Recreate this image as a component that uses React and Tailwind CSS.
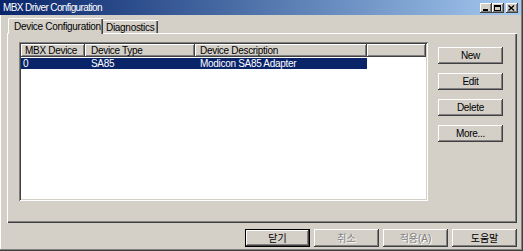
export default function App() {
  const raised =
    "shadow-[inset_-1px_-1px_0_#404040,inset_1px_1px_0_#ffffff,inset_-2px_-2px_0_#808080]";
  const btn =
    "w-[65px] h-[17px] flex items-center justify-center bg-[#d4d0c8] shadow-[inset_-1px_-1px_0_#404040,inset_1px_1px_0_#ffffff,inset_-2px_-2px_0_#808080]";
  const bbtn =
    "w-[65px] h-[18px] flex items-center justify-center bg-[#d4d0c8] shadow-[inset_-1px_-1px_0_#404040,inset_1px_1px_0_#ffffff,inset_-2px_-2px_0_#808080]";
  const disabled = "text-[#808080] [text-shadow:1px_1px_0_#ffffff]";
  return (
    <div className="w-[523px] h-[251px] bg-[#d4d0c8] flex flex-col overflow-hidden text-black text-[10px] tracking-[-0.3px] font-['Liberation_Sans','Noto_Sans_CJK_KR',sans-serif] shadow-[inset_-1px_-1px_0_#404040,inset_-2px_-2px_0_#808080,inset_1px_0_0_#ffffff]">
      {/* title bar */}
      <div className="h-[15px] mr-[2px] flex items-center justify-between pl-[3px] pr-[3px] bg-linear-to-r from-[#0a246a] to-[#a6caf0]">
        <span className="text-white text-[10px] leading-[15px] tracking-[-0.6px]">MBX Driver Configuration</span>
        <div className="flex items-center">
          <div className={"w-[12px] h-[10px] bg-[#d4d0c8] flex items-end justify-center pb-[2px] pr-[2px] " + raised}>
            <div className="w-[5px] h-[2px] bg-black" />
          </div>
          <div className={"w-[12px] h-[10px] bg-[#d4d0c8] flex items-center justify-center pr-[1px] " + raised}>
            <div className="w-[7px] h-[6px] border border-black border-t-2" />
          </div>
          <div className={"ml-[2px] w-[12px] h-[10px] bg-[#d4d0c8] flex items-center justify-center pr-[1px] " + raised}>
            <svg width="7" height="6" viewBox="0 0 7 6">
              <path d="M0.5 0.5 L6 5.5 M6 0.5 L0.5 5.5" stroke="#000" strokeWidth="1.4" />
            </svg>
          </div>
        </div>
      </div>

      {/* main */}
      <div className="flex-1 flex flex-col pl-[7px] pr-[6px] pt-[3px]">
        {/* tabs */}
        <div className="h-[15px] flex items-end relative z-10">
          <div className="ml-[1px] w-[95px] h-[16px] -mb-[1px] bg-[#d4d0c8] pl-[5px] leading-[15px] border-l border-t border-white shadow-[inset_-1px_0_0_#404040,inset_-2px_0_0_#808080] rounded-tl-[2px]">
            Device Configuration
          </div>
          <div className="w-[55px] h-[13px] bg-[#d4d0c8] pl-[3px] leading-[13px] border-t border-white shadow-[inset_-1px_0_0_#404040,inset_-2px_0_0_#808080]">
            Diagnostics
          </div>
        </div>

        {/* panel */}
        <div className="h-[190px] flex items-start pl-[12px] shadow-[inset_1px_1px_0_#ffffff,inset_-1px_-1px_0_#404040,inset_-2px_-2px_0_#808080]">
          {/* list */}
          <div className="mt-[9px] w-[409px] h-[159px] bg-white p-[2px] shadow-[inset_1px_1px_0_#808080,inset_-1px_-1px_0_#ffffff,inset_2px_2px_0_#404040,inset_-2px_-2px_0_#d4d0c8]">
            <div className="flex h-[13px] bg-[#d4d0c8] leading-[13px]">
              <div className={"w-[64px] pl-[4px] " + raised}>MBX Device</div>
              <div className={"w-[110px] pl-[6px] " + raised}>Device Type</div>
              <div className={"w-[172px] pl-[5px] " + raised}>Device Description</div>
              <div className={"flex-1 " + raised} />
            </div>
            <div className="flex h-[11px] leading-[11px] mt-[1px]">
              <div className="flex w-[346px] bg-[#0a246a] text-white">
                <div className="w-[64px] pl-[2px]">0</div>
                <div className="w-[110px] pl-[6px]">SA85</div>
                <div className="w-[172px] pl-[5px]">Modicon SA85 Adapter</div>
              </div>
            </div>
          </div>

          {/* side buttons */}
          <div className="ml-[10px] mt-[14px] flex flex-col gap-[9px]">
            <div className={btn}>New</div>
            <div className={btn}>Edit</div>
            <div className={btn}>Delete</div>
            <div className={btn}>More...</div>
          </div>
        </div>

        {/* bottom buttons */}
        <div className="mt-[6px] flex justify-end gap-[4px] tracking-normal">
          <div className="w-[65px] h-[18px] border border-black flex">
            <div className="flex-1 flex items-center justify-center bg-[#d4d0c8] shadow-[inset_-1px_-1px_0_#404040,inset_1px_1px_0_#ffffff,inset_-2px_-2px_0_#808080]">
              닫기
            </div>
          </div>
          <div className={bbtn + " " + disabled}>취소</div>
          <div className={bbtn + " " + disabled}>적용(A)</div>
          <div className={bbtn}>도움말</div>
        </div>
      </div>
    </div>
  );
}
